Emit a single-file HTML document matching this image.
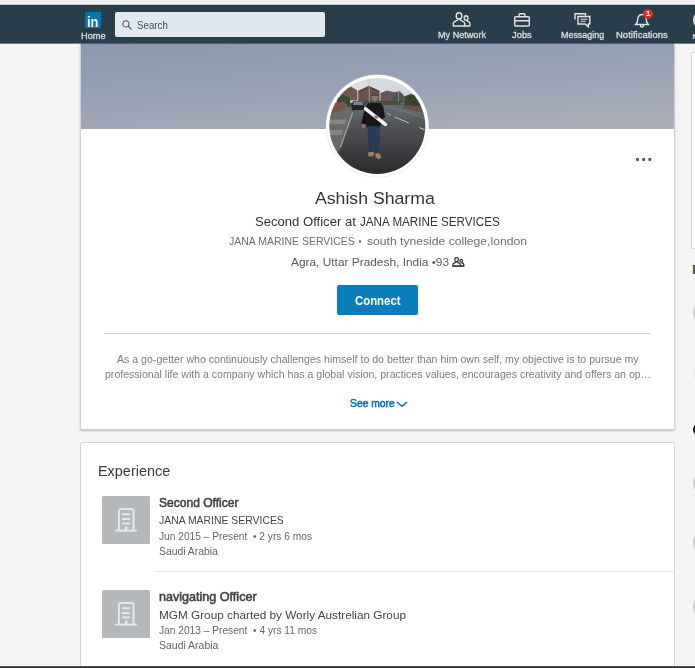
<!DOCTYPE html>
<html lang="en">
<head>
<meta charset="utf-8">
<title>Ashish Sharma | LinkedIn</title>
<style>
*{margin:0;padding:0;box-sizing:border-box}
html,body{width:695px;height:668px;overflow:hidden;background:#f4f4f4}
body{position:relative;font-family:"Liberation Sans",sans-serif;color:#333}
.abs{position:absolute}
.t{position:absolute;white-space:nowrap;line-height:1}
#topstrip{left:0;top:0;width:695px;height:4px;background:linear-gradient(#f0f0f0 0,#f0f0f0 70%,#fafafa 100%)}
#nav{left:0;top:4px;width:695px;height:39px;background:#283e4a;}
#botstrip{left:0;top:666px;width:695px;height:2px;background:linear-gradient(#55585a 0,#55585a 50%,#2a2a2a 50%,#2a2a2a 100%)}
#logo{left:85px;top:12px;width:16px;height:16px;background:#0077b5;border-radius:1px}
#search{left:115px;top:12px;width:210px;height:25px;background:#e1e9ee;border-radius:2px}
.nl{color:#dfe4e7;font-size:10px}
#card1{left:80px;top:43px;width:595px;height:387px;background:#fff;border:1px solid #d2d2d2;border-top:0;border-radius:0 0 2px 2px;box-shadow:0 1px 2px rgba(0,0,0,.22)}
#cover{left:81px;top:43px;width:593px;height:86px;background:linear-gradient(176deg,#8a97ae 0%,#95a0b4 40%,#a3a9b7 75%,#abafb9 100%)}
#card2{left:80px;top:442px;width:595px;height:240px;background:#fff;border:1px solid #d4d4d4;border-radius:2px}
.rc{left:692.500px;width:24px;height:24px;border-radius:50%;background:#c9cdd0}
.logo-box{width:47.500px;height:48px;background:#b5b8bb;border-radius:1.500px}
</style>
</head>
<body>
<div class="abs" id="topstrip"></div>
<div class="abs" id="nav"></div>
<div class="abs" style="left:0;top:4px;width:695px;height:1px;background:rgba(245,245,245,.72)"></div>

<!-- nav contents -->
<div class="abs" id="logo"></div>
<div class="abs" id="search"></div>
<svg class="abs" style="left:122px;top:20px" width="10" height="10" viewBox="0 0 10 10"><circle cx="3.900" cy="3.900" r="3.100" fill="none" stroke="#3c4d57" stroke-width="1.050"/><path d="M6.200 6.200 L9.200 9.200" stroke="#3c4d57" stroke-width="1.200" stroke-linecap="round"/></svg>

<svg class="abs" style="left:452px;top:12px" width="19.500" height="16" viewBox="0 0 19.500 16" fill="none" stroke="#dfe4e7" stroke-width="1.400" stroke-linejoin="round"><ellipse cx="7" cy="3.900" rx="2.800" ry="3.100"/><path d="M5.600 6.800V8.200L2 10Q1.300 10.400 1.300 11.200V14H12.600V11.200Q12.600 10.400 11.900 10L8.400 8.200V6.800"/><ellipse cx="14.100" cy="6" rx="1.900" ry="2.300"/><path d="M15.200 8V9L17.200 10.100Q17.900 10.500 17.900 11.300V14H12.600"/></svg>

<svg class="abs" style="left:514px;top:13px" width="16" height="14" viewBox="0 0 16 14" fill="none" stroke="#dfe4e7" stroke-width="1.4"><rect x=".7" y="3.700" width="14.600" height="9.300" rx="1"/><path d="M5 3.700V1.700c0-.5.400-1 1-1h4c.6 0 1 .5 1 1v2M.7 7.700h14.600"/></svg>

<svg class="abs" style="left:574px;top:13px" width="17" height="15" viewBox="0 0 17 15" fill="none" stroke="#dfe4e7" stroke-width="1.400"><path d="M1 6.500V.8h10.500v2"/><path d="M4 3.500h11.800v7.500h-1.500v2.800l-3.300-2.800H4z"/><path d="M6.500 6.200h7M6.500 8.300h5" stroke-width="1"/></svg>

<svg class="abs" style="left:634px;top:13px" width="16" height="15" viewBox="0 0 16 15" fill="none" stroke="#dfe4e7" stroke-width="1.400"><path d="M8 1.500c-2.500 0-3.800 1.800-4.200 4.500l-.5 3.200L1.500 11.500h13l-1.800-2.300-.5-3.200c-.4-2.700-1.700-4.500-4.200-4.500z"/><path d="M6.500 12v.5c0 .8.700 1.500 1.500 1.500s1.500-.7 1.500-1.500V12" /></svg>
<div class="abs" style="left:643.200px;top:9px;width:10px;height:10px;border-radius:50%;background:#dd2e1f"></div>
<div class="t" style="left:646px;top:10.300px;font-size:8px;font-weight:bold;color:#fff">1</div>

<div class="abs" style="left:692.500px;top:11px;width:18px;height:18px;border-radius:50%;background:#d4d8db"></div>
<div class="t nl" style="left:692.400px;top:32.600px;font-size:7.500px;font-weight:bold">Me</div>

<!-- cards -->
<div class="abs" id="card1"></div>
<div class="abs" id="cover"></div>
<div class="abs" style="left:0;top:43px;width:695px;height:1px;background:rgba(40,62,74,.62)"></div>
<div class="abs" id="card2"></div>

<!-- avatar -->
<svg class="abs" style="left:325px;top:73px" width="106" height="106" viewBox="0 0 106 106">
<defs><clipPath id="av"><circle cx="52.3" cy="53" r="48"/></clipPath>
<linearGradient id="road" x1="0" y1="0" x2="0" y2="1"><stop offset="0" stop-color="#707376"/><stop offset=".28" stop-color="#505356"/><stop offset=".65" stop-color="#393a3d"/><stop offset="1" stop-color="#232426"/></linearGradient>
<linearGradient id="sky" x1="0" y1="0" x2="1" y2="0"><stop offset="0" stop-color="#e2e4e7"/><stop offset="1" stop-color="#cfd2d7"/></linearGradient>
<filter id="bl" x="-5%" y="-5%" width="110%" height="110%"><feGaussianBlur stdDeviation="0.7"/></filter></defs>
<circle cx="52.3" cy="53" r="51.500" fill="#e4e4e4"/>
<circle cx="52.3" cy="53" r="51" fill="#fff"/>
<g clip-path="url(#av)"><g filter="url(#bl)">
<rect x="0" y="0" width="106" height="40" fill="url(#sky)"/>
<rect x="0" y="29.9" width="106" height="80" fill="url(#road)"/>
<path d="M3.6 35.7 L25.8 34.5 L28.3 39.0 L15.9 74.4 L6.9 89.2 L0.3 89.2Z" fill="#676968"/>
<path d="M27.8 39.5 L15.4 74.4" stroke="#a3a5a3" stroke-width="1.200" fill="none"/>
<path d="M4.4 46.4 L21.7 46.4 L20.1 51.3 L4.4 51.3Z" fill="#848684"/>
<path d="M4.4 57.1 L18.1 57.1 L16.4 62.0 L4.4 62.0Z" fill="#848684"/>
<path d="M66.2 33.6 L102.4 43.9 L102.4 36.5 L76.0 30.8Z" fill="#66686a"/>
<path d="M65.8 34.2 L99.9 45.1" stroke="#7c7e80" stroke-width="0.800" fill="none"/>
<path d="M15.1 19.2 L25.8 13.5 L32.4 17.6 L32.4 27.5 L15.1 27.5Z" fill="#6f5850"/>
<path d="M33.2 18.1 L43.9 13.0 L54.6 18.1 L54.6 28.3 L33.2 28.3Z" fill="#69534c"/>
<path d="M33.2 18.1 L43.9 13.0 L54.6 18.1 L53.0 18.7 L43.9 14.8 L34.9 18.7Z" fill="#56433f"/>
<path d="M55.5 20.1 L62.0 17.6 L69.5 19.2 L74.4 18.1 L78.5 21.7 L78.5 29.1 L55.5 29.1Z" fill="#66555a"/>
<path d="M67.8 21.7 L74.4 19.2 L79.3 23.3 L79.3 29.9 L67.8 29.9Z" fill="#4f5648"/>
<path d="M79.3 23.3 L85.9 20.9 L94.2 23.3 L98.3 29.9 L98.3 34.0 L79.3 32.4Z" fill="#38422f"/>
<path d="M77.7 31.6 L97.4 34.0 L97.4 40.1 L77.7 35.2Z" fill="#6b5048"/>
<path d="M11.8 25.0 L18.4 22.0 L24.7 24.2 L25.3 30.8 L11.8 30.8Z" fill="#3b4835"/>
<path d="M6.9 29.9 L20.1 28.6 L20.1 35.7 L6.9 40.1Z" fill="#7b5344"/>
<path d="M21.7 29.9 L36.5 29.1 L37.3 32.4 L21.7 34.0Z" fill="#3e4738"/>
<path d="M38.2 27.5 L76.0 28.0 L76.0 31.9 L38.2 31.9Z" fill="#48503f"/>
<path d="M44.3 5.2 L44.3 29.1" stroke="#b9bcc0" stroke-width="0.700" fill="none"/>
<path d="M73.6 15.1 L73.6 28.3" stroke="#b9bcc0" stroke-width="0.500" fill="none"/>
<path d="M28.0 28.3 L37.8 28.3 L39.2 32.4 L39.2 37.0 L26.6 37.3 L26.6 32.4Z" fill="#23252c"/>
<path d="M28.8 28.8 L37.2 28.8 L38.2 32.1 L27.8 32.1Z" fill="#7d8692"/>
<path d="M61.5 40.1 L66.2 42.1" stroke="#c4c6c8" stroke-width="0.700" fill="none"/>
<path d="M69.5 43.9 L83.8 50.0" stroke="#d0d2d4" stroke-width="0.900" fill="none"/>
<path d="M94.5 54.6 L99.4 56.6" stroke="#d0d2d4" stroke-width="1" fill="none"/>
<ellipse cx="49.7" cy="24.3" rx="3" ry="4.100" fill="#94756a"/>
<path d="M46.4 20.1 L53.0 20.1 L53.5 23.0 L45.9 23.0Z" fill="#5e4a44"/>
<path d="M43.9 29.9 L55.5 29.9 L58.3 34.0 L60.1 43.9 L56.3 46.4 L55.5 53.8 L41.8 53.8 L41.1 51.3 L37.3 51.7 L36.5 49.4 L40.1 34.0Z" fill="#17181d"/>
<ellipse cx="38.5" cy="53.0" rx="2" ry="2.300" fill="#94705f"/>
<path d="M42.3 53.5 L55.0 53.5 L54.6 67.8 L53.8 79.3 L49.4 79.3 L48.9 62.9 L47.7 79.0 L43.9 78.5 L43.1 66.2Z" fill="#2b3a55"/>
<path d="M43.4 79.3 L48.4 78.7 L49.4 81.8 L46.4 83.8 L43.1 83.0Z" fill="#a57c65"/>
<path d="M50.5 80.2 L54.3 80.2 L56.6 84.3 L53.8 86.4 L50.5 83.9Z" fill="#a57c65"/>
<path d="M40.6 35.9 L60.4 51.3" stroke="#f4f4f6" stroke-width="3.600" stroke-linecap="round" fill="none"/>
<ellipse cx="51.3" cy="43.9" rx="2.200" ry="1.900" fill="#a3806e"/>
</g></g>
</svg>

<!-- dots -->
<div class="abs" style="left:636.300px;top:157.500px;width:3.200px;height:3.200px;border-radius:1px;background:#555;box-shadow:6.150px 0 0 #555,12.300px 0 0 #555"></div>

<!-- profile text -->
<svg class="abs" style="left:451.800px;top:256.900px" width="12.800" height="10.500" viewBox="0 0 19.500 16" fill="none" stroke="#3a3a3a" stroke-width="1.900" stroke-linejoin="round"><ellipse cx="7" cy="3.900" rx="2.800" ry="3.100"/><path d="M5.600 6.800V8.200L2 10Q1.300 10.400 1.300 11.200V13.500H12.600V11.200Q12.600 10.400 11.900 10L8.400 8.200V6.800"/><ellipse cx="14.100" cy="6" rx="1.900" ry="2.300"/><path d="M15.200 8V9L17.200 10.100Q17.900 10.500 17.900 11.300V13.500H12.600"/><path d="M.400 14.200H18.900" stroke-width="1.700"/></svg>

<div class="abs" style="left:358.600px;top:239.900px;width:2.900px;height:2.900px;border-radius:50%;background:#6e6e6e"></div>
<div class="abs" id="btn" style="left:337px;top:285px;width:81px;height:30px;background:#0a7dbb;border-radius:2px"></div>

<div class="abs" style="left:105px;top:333px;width:545px;height:1px;background:#cfcfcf"></div>

<svg class="abs" style="left:396px;top:401px" width="12" height="7" viewBox="0 0 12 7" fill="none" stroke="#0a77b3" stroke-width="1.500"><path d="M1 1.200 L6 5.300 L11 1.200"/></svg>

<!-- experience -->

<div class="abs logo-box" style="left:102px;top:496px"></div>
<svg class="abs" style="left:114px;top:506px" width="24" height="28" viewBox="0 0 24 28" fill="none" stroke="#e4e6e8" stroke-width="2"><path d="M4.900 24.400V5Q4.900 3 6.900 3H17.500Q19.500 3 19.500 5V24.400"/><path d="M1.200 24.600H22.800"/><path d="M8 8.300H16M8 12.900H16M8 17.400H16"/><path d="M12.200 20.500V24" stroke-width="2.600"/></svg>

<div class="abs" style="left:156px;top:571px;width:518px;height:1px;background:#e4e4e4"></div>

<div class="abs logo-box" style="left:102px;top:590.200px"></div>
<svg class="abs" style="left:114px;top:600.2px" width="24" height="28" viewBox="0 0 24 28" fill="none" stroke="#e4e6e8" stroke-width="2"><path d="M4.900 24.400V5Q4.900 3 6.900 3H17.500Q19.500 3 19.500 5V24.400"/><path d="M1.200 24.600H22.800"/><path d="M8 8.300H16M8 12.900H16M8 17.400H16"/><path d="M12.200 20.500V24" stroke-width="2.600"/></svg>

<!-- right rail -->
<div class="abs" style="left:691px;top:52px;width:20px;height:197px;background:#fff;border:1px solid #d9d9d9"></div>
<div class="t" style="left:692.300px;top:264px;font-size:12px;font-weight:bold;color:#444">P</div>
<div class="abs rc" style="top:299.600px"></div>
<div class="abs rc" style="top:361px;background:#ececec"></div>
<div class="abs rc" style="top:421px;height:17px;background:#111"></div>
<div class="abs rc" style="top:471px"></div>
<div class="abs rc" style="top:530px"></div>
<div class="abs rc" style="top:595px"></div>

<div class="abs" id="botstrip"></div>
<div class="t" id="n-in" style="left:87.1px;top:13.60px;font-size:15px;font-weight:bold;color:#fff;transform:scaleX(0.8618);transform-origin:0 0">in</div>
<div class="t" id="n-home" style="left:81.0px;top:32.00px;font-size:9px;font-weight:normal;-webkit-text-stroke:0.35px #d3dade;color:#d3dade;transform:scaleX(1.0243);transform-origin:0 0">Home</div>
<div class="t" id="n-search" style="left:136.7px;top:21.23px;font-size:10px;font-weight:normal;color:#3a4a55;transform:scaleX(0.9751);transform-origin:0 0">Search</div>
<div class="t" id="n-net" style="left:438.0px;top:31.00px;font-size:9px;font-weight:normal;-webkit-text-stroke:0.35px #d3dade;color:#d3dade;transform:scaleX(1.0102);transform-origin:0 0">My Network</div>
<div class="t" id="n-jobs" style="left:512.0px;top:31.00px;font-size:9px;font-weight:normal;-webkit-text-stroke:0.35px #d3dade;color:#d3dade;transform:scaleX(1.0412);transform-origin:0 0">Jobs</div>
<div class="t" id="n-msg" style="left:560.6px;top:31.00px;font-size:9px;font-weight:normal;-webkit-text-stroke:0.35px #d3dade;color:#d3dade;transform:scaleX(0.9924);transform-origin:0 0">Messaging</div>
<div class="t" id="n-not" style="left:616.0px;top:31.00px;font-size:9px;font-weight:normal;-webkit-text-stroke:0.35px #d3dade;color:#d3dade;transform:scaleX(1.0565);transform-origin:0 0">Notifications</div>
<div class="t" id="p-name" style="left:314.8px;top:190.78px;font-size:16.8px;font-weight:normal;color:#333;transform:scaleX(1.0528);transform-origin:0 0">Ashish Sharma</div>
<div class="t" id="p-head-a" style="left:254.8px;top:215.84px;font-size:12px;font-weight:normal;color:#333;transform:scaleX(1.0897);transform-origin:0 0">Second Officer at</div>
<div class="t" id="p-head-b" style="left:360.3px;top:215.84px;font-size:12px;font-weight:normal;color:#333;transform:scaleX(0.9713);transform-origin:0 0">JANA MARINE SERVICES</div>
<div class="t" id="p-comp-a" style="left:229.2px;top:235.57px;font-size:11.5px;font-weight:normal;color:#6e6e6e;transform:scaleX(0.9127);transform-origin:0 0">JANA MARINE SERVICES</div>
<div class="t" id="p-comp-c" style="left:366.6px;top:235.57px;font-size:11.5px;font-weight:normal;color:#6e6e6e;transform:scaleX(1.0552);transform-origin:0 0">south tyneside college,london</div>
<div class="t" id="p-loc" style="left:291.4px;top:257.09px;font-size:11px;font-weight:normal;color:#5a5a5a;transform:scaleX(1.0804);transform-origin:0 0">Agra, Uttar Pradesh, India &#8226;93</div>
<div class="t" id="p-conn" style="left:354.9px;top:294.74px;font-size:12px;font-weight:bold;color:#fff;transform:scaleX(0.9479);transform-origin:0 0">Connect</div>
<div class="t" id="s-1" style="left:117.2px;top:355.14px;font-size:10px;font-weight:normal;color:#7d7d7d;transform:scaleX(1.0579);transform-origin:0 0">As a go-getter who continuously challenges himself to do better than him own self, my objective is to pursue my</div>
<div class="t" id="s-2" style="left:105.3px;top:370.14px;font-size:10px;font-weight:normal;color:#7d7d7d;transform:scaleX(1.0558);transform-origin:0 0">professional life with a company which has a global vision, practices values, encourages creativity and offers an op&#8230;</div>
<div class="t" id="s-more" style="left:350.4px;top:399.24px;font-size:10px;font-weight:normal;-webkit-text-stroke:0.55px #0a77b3;color:#0a77b3;transform:scaleX(1.0332);transform-origin:0 0">See more</div>
<div class="t" id="e-h" style="left:98.4px;top:463.75px;font-size:14px;font-weight:normal;color:#3a3a3a;transform:scaleX(1.0307);transform-origin:0 0">Experience</div>
<div class="t" id="e1-t" style="left:159.4px;top:496.74px;font-size:12px;font-weight:normal;-webkit-text-stroke:0.55px #444;color:#444;transform:scaleX(1.0031);transform-origin:0 0">Second Officer</div>
<div class="t" id="e1-c" style="left:159.4px;top:515.47px;font-size:11.5px;font-weight:normal;color:#444;transform:scaleX(0.9055);transform-origin:0 0">JANA MARINE SERVICES</div>
<div class="t" id="e1-d" style="left:159.4px;top:532.03px;font-size:10px;font-weight:normal;color:#666;transform:scaleX(1.0183);transform-origin:0 0">Jun 2015 &#8211; Present &nbsp;&#8226; 2 yrs 6 mos</div>
<div class="t" id="e1-l" style="left:158.8px;top:546.83px;font-size:10px;font-weight:normal;color:#666;transform:scaleX(1.0367);transform-origin:0 0">Saudi Arabia</div>
<div class="t" id="e2-t" style="left:159.4px;top:590.84px;font-size:12px;font-weight:normal;-webkit-text-stroke:0.55px #444;color:#444;transform:scaleX(1.0475);transform-origin:0 0">navigating Officer</div>
<div class="t" id="e2-c" style="left:158.6px;top:609.57px;font-size:11.5px;font-weight:normal;color:#444;transform:scaleX(1.0232);transform-origin:0 0">MGM Group charted by Worly Austrelian Group</div>
<div class="t" id="e2-d" style="left:159.4px;top:626.13px;font-size:10px;font-weight:normal;color:#666;transform:scaleX(1.0188);transform-origin:0 0">Jan 2013 &#8211; Present &nbsp;&#8226; 4 yrs 11 mos</div>
<div class="t" id="e2-l" style="left:158.8px;top:640.93px;font-size:10px;font-weight:normal;color:#666;transform:scaleX(1.0473);transform-origin:0 0">Saudi Arabia</div>
</body>
</html>
